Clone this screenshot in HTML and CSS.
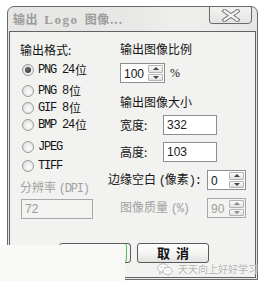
FILE: index.html
```html
<!DOCTYPE html>
<html>
<head>
<meta charset="utf-8">
<link rel="stylesheet" href="styles.css">
</head>
<body>
<div class="window">
  <div class="titlebar">
    <span class="title">输出 <span class="t-en">Logo</span> 图像...</span>
    <span class="close">
      <svg width="20" height="13" viewBox="0 0 20 13">
        <path d="M3.5 2 L16.5 11 M16.5 2 L3.5 11" stroke="#777" stroke-width="4.2" stroke-linecap="square"/>
        <path d="M3.5 2 L16.5 11 M16.5 2 L3.5 11" stroke="#f4f4f4" stroke-width="2.2" stroke-linecap="square"/>
      </svg>
    </span>
  </div>
  <div class="client">
    <div class="cols">
      <div class="left">
        <div class="label first">输出格式:</div>
        <ul class="radios">
          <li class="radio on"><span class="dot"></span><span class="en">PNG 24</span>位</li>
          <li class="radio"><span class="dot"></span><span class="en">PNG 8</span>位</li>
          <li class="radio"><span class="dot"></span><span class="en">GIF 8</span>位</li>
          <li class="radio"><span class="dot"></span><span class="en">BMP 24</span>位</li>
          <li class="radio"><span class="dot"></span><span class="en">JPEG</span></li>
          <li class="radio"><span class="dot"></span><span class="en">TIFF</span></li>
        </ul>
        <div class="label dis dpi">分辨率 <span class="en">(DPI)</span></div>
        <div class="field dis dpi-field">72</div>
      </div>
      <div class="right">
        <div class="label head1">输出图像比例</div>
        <div class="row ratio">
          <div class="spin ratio-spin"><span class="val">100</span><span class="arrows"><span class="up"><i></i></span><span class="down"><i></i></span></span></div>
          <span class="pct">%</span>
        </div>
        <div class="label head2">输出图像大小</div>
        <div class="row size w">
          <span class="lbl">宽度:</span><div class="field size-field">332</div>
        </div>
        <div class="row size h">
          <span class="lbl">高度:</span><div class="field size-field">103</div>
        </div>
        <div class="row margin">
          <span class="lbl">边缘空白 <span class="en">(</span>像素<span class="en">):</span></span>
          <div class="spin small-spin"><span class="val">0</span><span class="arrows"><span class="up"><i></i></span><span class="down"><i></i></span></span></div>
        </div>
        <div class="row quality">
          <span class="lbl dis">图像质量 <span class="en">(%)</span></span>
          <div class="spin small-spin dis"><span class="val">90</span><span class="arrows"><span class="up"><i></i></span><span class="down"><i></i></span></span></div>
        </div>
      </div>
    </div>
    <div class="buttons">
      <button class="btn ok">确 定</button>
      <button class="btn">取&nbsp;&nbsp;消</button>
    </div>
  </div>
</div>
<div class="mask"></div>
<div class="watermark">
  <svg width="16" height="13" viewBox="0 0 16 13">
    <ellipse cx="6" cy="5" rx="5.2" ry="4.2" fill="#fff" stroke="#b8b8b8" stroke-width="1"/>
    <path d="M3 8.5 L2.5 11 L5 9.2" fill="#fff" stroke="#b8b8b8" stroke-width="1"/>
    <ellipse cx="10.5" cy="8" rx="4.6" ry="3.6" fill="#fff" stroke="#b8b8b8" stroke-width="1"/>
    <circle cx="4.3" cy="4.3" r="0.8" fill="#b8b8b8"/>
    <circle cx="7.6" cy="4.3" r="0.8" fill="#b8b8b8"/>
    <circle cx="9.2" cy="7.6" r="0.6" fill="#b8b8b8"/>
    <circle cx="11.9" cy="7.6" r="0.6" fill="#b8b8b8"/>
  </svg>
  <span class="wm-text">天天向上好好学习</span>
</div>
</body>
</html>
```

FILE: styles.css
```css
* { box-sizing: border-box; }
html, body { margin: 0; padding: 0; }
body {
  width: 266px;
  height: 281px;
  overflow: hidden;
  position: relative;
  background: #ffffff;
  font: 12px/14px "Noto Sans CJK SC", sans-serif;
  color: #141414;
}
.window {
  margin: 6px 0 0 7px;
  width: 251px;
  height: 274px;
  border: 1px solid #6a6a6a;
  border-radius: 7px 7px 0 0;
  background: linear-gradient(90deg, #e6e6e4 0%, #e8e8e6 50%, #efefed 70%, #e6e6e4 100%);
  display: flex;
  flex-direction: column;
}
.titlebar {
  height: 24px;
  display: flex;
  align-items: flex-start;
}
.title {
  margin: 4px 0 0 5px;
  font: bold 12px/16px "Noto Sans CJK SC", sans-serif;
  color: #9c9c9c;
  letter-spacing: 0.5px;
  word-spacing: 3px;
  white-space: nowrap;
}
.t-en { font: bold 13px/16px "Liberation Serif", serif; letter-spacing: 1.5px; }
.close {
  margin: -1px 5px 0 auto;
  width: 43px;
  height: 18px;
  border: 1px solid #6a6a6a;
  border-radius: 0 0 4px 3px;
  background: linear-gradient(#f2f2f0, #e4e4e2);
  display: flex;
  align-items: center;
  justify-content: center;
}
.close svg { display: block; }
.client {
  margin: 0 1px 1px 1px;
  height: 247px;
  border: 1px solid #626262;
  background: #f2f2f0;
}
.cols { display: flex; }
.left { width: 98px; padding-left: 10px; }
.right { flex: 1; }
.label { height: 14px; white-space: nowrap; }
.dis { color: #a2a2a2; }
.en { font: 12px/14px "Liberation Mono", monospace; letter-spacing: -1.2px; }
.first { margin-top: 11px; }
.radios { list-style: none; margin: 0; padding: 0; }
.radio {
  height: 14px;
  display: flex;
  align-items: center;
  white-space: nowrap;
}
.radio .en { margin-right: 1px; }
.radio:nth-child(1) { margin-top: 6px; }
.radio:nth-child(2) { margin-top: 7px; }
.radio:nth-child(3) { margin-top: 3px; }
.radio:nth-child(4) { margin-top: 3px; }
.radio:nth-child(5) { margin-top: 8px; }
.radio:nth-child(6) { margin-top: 5px; }
.dot {
  width: 12px;
  height: 12px;
  margin: 0 4px 0 2px;
  border: 1px solid #9a9a9a;
  border-radius: 50%;
  background: radial-gradient(circle at 60% 60%, #ffffff 0%, #e9e9e7 55%, #cfcfcd 100%);
  display: flex;
  align-items: center;
  justify-content: center;
}
.radio.on .dot::after {
  content: "";
  width: 6px;
  height: 6px;
  border-radius: 50%;
  background: radial-gradient(circle at 40% 40%, #6a6a6a, #2a2a2a);
}
.dpi { margin-top: 7px; }
.field {
  height: 20px;
  border: 1px solid #8e8e8e;
  background: #ffffff;
  padding: 2px 0 0 3px;
  font: 12px/14px "Liberation Sans", sans-serif;
  color: #1a1a1a;
}
.field.dis { border-color: #a8a8a8; background: #f3f3f1; color: #9a9a9a; }
.dpi-field { margin: 5px 0 0 1px; width: 72px; }
.head1 { margin: 10px 0 0 12px; }
.head2 { margin: 12px 0 0 12px; }
.row { display: flex; align-items: center; white-space: nowrap; }
.ratio { margin: 7px 0 0 12px; }
.pct { margin-left: 5px; font: 12px/14px "Liberation Serif", serif; }
.spin {
  height: 20px;
  border: 1px solid #8e8e8e;
  background: #ffffff;
  display: flex;
  padding: 1px 1px 1px 3px;
  font: 12px/16px "Liberation Sans", sans-serif;
}
.spin .val { flex: 1; padding-top: 1px; }
.ratio-spin { width: 45px; }
.small-spin { width: 39px; }
.arrows { width: 15px; display: flex; flex-direction: column; gap: 1px; }
.arrows > span {
  flex: 1;
  border: 1px solid #b4b4b4;
  border-radius: 1px;
  background: linear-gradient(#fbfbfb, #e0e0de);
  display: flex;
  align-items: center;
  justify-content: center;
}
.arrows i {
  width: 0;
  height: 0;
  border-left: 3px solid transparent;
  border-right: 3px solid transparent;
}
.up i { border-bottom: 3px solid #444; }
.down i { border-top: 3px solid #444; }
.spin.dis { border-color: #a8a8a8; background: #f3f3f1; color: #a0a0a0; }
.spin.dis .arrows i { border-bottom-color: #8a8a8a; border-top-color: #8a8a8a; }
.spin.dis .up i { border-top-color: transparent; }
.spin.dis .down i { border-bottom-color: transparent; }
.size { margin-left: 12px; }
.size .lbl { width: 43px; }
.size-field { width: 54px; }
.w { margin-top: 6px; }
.h { margin-top: 7px; }
.margin { margin-top: 8px; }
.margin .lbl { width: 99px; }
.quality { margin: 8px 0 0 12px; }
.quality .lbl { width: 87px; }
.buttons {
  display: flex;
  gap: 6px;
  margin: 24px 0 0 49px;
}
.btn {
  width: 72px;
  height: 20px;
  border: 1px solid #5a5a5a;
  border-radius: 3px;
  background: linear-gradient(#ffffff 0%, #f4f4f2 50%, #e2e2e0 100%);
  font: bold 13px/16px "Noto Sans CJK SC", sans-serif;
  color: #111;
  padding: 0;
}
.ok { box-shadow: inset -3px 0 0 #f4f4f2, inset -4px 0 0 #5fc05f; }
.mask {
  position: absolute;
  left: 0;
  top: 245px;
  width: 125px;
  height: 36px;
  background: #f8f8f7;
}
.watermark {
  position: absolute;
  left: 157px;
  top: 262px;
  display: flex;
  align-items: center;
  gap: 5px;
  height: 14px;
}
.wm-text {
  font: 10px/12px "Noto Sans CJK SC", sans-serif;
  color: #b2b2b2;
  text-shadow: 0 0 1px #fff, 0 0 1px #fff;
  white-space: nowrap;
}
```
